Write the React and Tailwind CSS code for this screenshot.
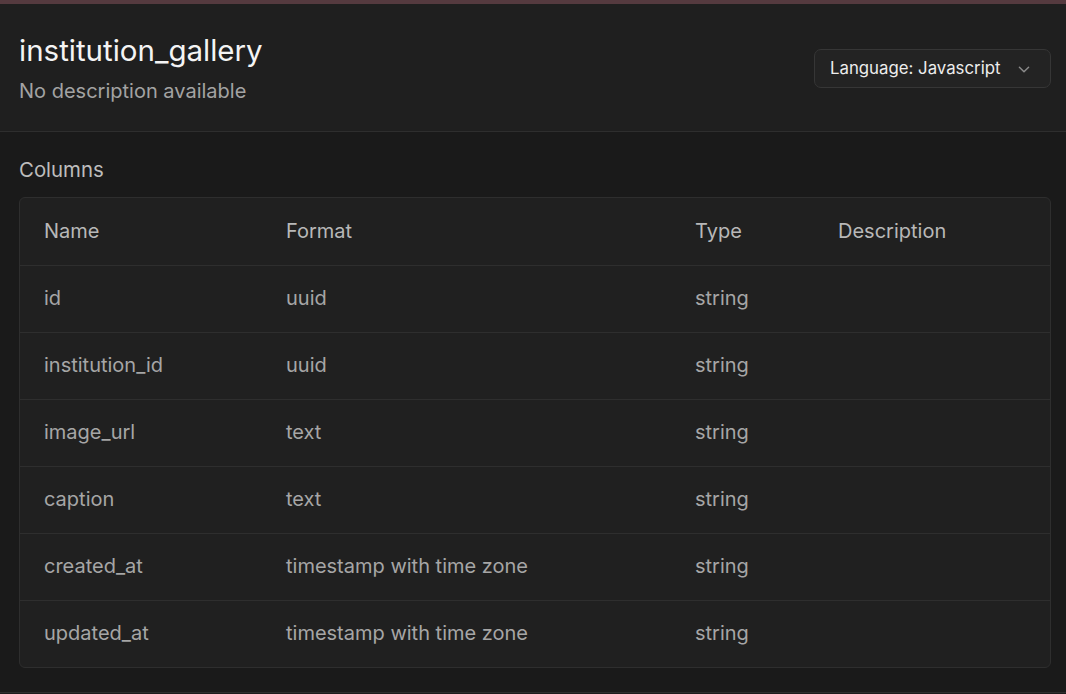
import React from 'react';

const rows = [
    ['id', 'uuid', 'string'],
    ['institution_id', 'uuid', 'string'],
    ['image_url', 'text', 'string'],
    ['caption', 'text', 'string'],
    ['created_at', 'timestamp with time zone', 'string'],
    ['updated_at', 'timestamp with time zone', 'string'],
];

const cols = 'grid grid-cols-[266px_409px_143px_1fr] items-center h-[67px]';

function Chevron() {
    return <svg width="22" height="22" viewBox="0 0 24 24" fill="none" stroke="currentColor" strokeWidth="1.6" strokeLinecap="round" strokeLinejoin="round">
        <path d="M7 10l5 5 5-5" />
    </svg>
}

export default function App() {
    return <div className="w-[1066px] h-[694px] overflow-hidden bg-[#1a1a1a] flex flex-col" style={{fontFamily: 'Inter, "Noto Sans", sans-serif'}}>
        <div className="h-[4px] bg-[#553a3f] shrink-0"></div>

        {/* header */}
        <div className="h-[128px] shrink-0 bg-[#1f1f1f] border-b border-[#2e2e2e] flex items-start justify-between px-[19px] pt-[28px]">
            <div>
                <h1 className="text-[29.5px] leading-[36px] text-[#f4f4f4]">institution_gallery</h1>
                <p className="mt-[10px] text-[20px] leading-[26px] text-[#a3a3a3]">No description available</p>
            </div>
            <button className="mt-[17px] mr-[-4px] h-[39px] w-[237px] rounded-[7px] border border-[#363636] bg-[#232323] flex items-center justify-between pl-[15px] pr-[15px] text-[16.8px] text-[#ededed]">
                <span>Language: Javascript</span>
                <span className="text-[#8a8a8a]"><Chevron /></span>
            </button>
        </div>

        {/* columns */}
        <div className="flex-1 px-[19px] pt-[25px]">
            <div className="text-[20.4px] leading-[26px] text-[#bdbdbd]">Columns</div>
            <div className="mt-[14px] w-[1032px] rounded-[6px] border border-[#2e2e2e] bg-[#202020] text-[20px]">
                <div className={cols + ' text-[#b8b8b8] pb-[2px]'}>
                    <div className="pl-[24px]">Name</div>
                    <div>Format</div>
                    <div>Type</div>
                    <div>Description</div>
                </div>
                {rows.map(r => (
                    <div key={r[0]} className={cols + ' border-t border-[#2e2e2e] text-[#a6a6a6] pb-[2px]'}>
                        <div className="pl-[24px]">{r[0]}</div>
                        <div>{r[1]}</div>
                        <div>{r[2]}</div>
                        <div></div>
                    </div>
                ))}
            </div>
        </div>
        <div className="h-[2px] shrink-0 border-t border-[#2e2e2e] bg-[#1c1c1c]"></div>
    </div>
}
